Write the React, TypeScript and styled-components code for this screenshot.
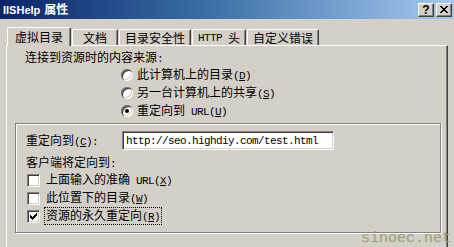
import React from "react";
import styled, { createGlobalStyle } from "styled-components";

const Global = createGlobalStyle`
  html, body { margin: 0; padding: 0; background: #D4D0C8; }
  * { box-sizing: border-box; }
  #root { width: 454px; height: 247px; }
`;

const Window = styled.div`
  position: relative;
  width: 454px;
  height: 247px;
  overflow: hidden;
  background: #D4D0C8;
  font-family: "Noto Sans CJK SC", "Liberation Sans", sans-serif;
  font-size: 12px;
  color: #000;
`;

const TitleBar = styled.div`
  height: 19px;
  display: flex;
  align-items: center;
  padding: 0 2px 0 3px;
  background: linear-gradient(to right, #0A246A 0%, #3A6EA5 45%, #A6CAF0 100%);
  color: #fff;
`;

const Title = styled.div`
  flex: 1;
  font-family: "Liberation Sans", "Noto Sans CJK SC", sans-serif;
  font-weight: bold;
  font-size: 11px;
  line-height: 19px;
  white-space: nowrap;
`;

const TitleCjk = styled.span`
  font-family: "Noto Sans CJK SC", sans-serif;
  font-size: 12px;
  margin-left: 4px;
`;

const Caps = styled.div`
  display: flex;
  gap: 2px;
`;

const CapBtn = styled.div`
  width: 16px;
  height: 14px;
  display: flex;
  align-items: center;
  justify-content: center;
  background: #D4D0C8;
  border-top: 1px solid #fff;
  border-left: 1px solid #fff;
  border-right: 1px solid #404040;
  border-bottom: 1px solid #404040;
  box-shadow: inset -1px -1px #808080;
  color: #000;
  font-family: "Liberation Sans", sans-serif;
  font-weight: bold;
  font-size: 12px;
  line-height: 12px;
`;

const Body = styled.div`
  padding: 8px 6px 0 6px;
`;

const TabStrip = styled.div`
  height: 18px;
  display: flex;
  align-items: flex-end;
  gap: 1px;
  padding-left: 1px;
  position: relative;
  z-index: 1;
`;

const Tab = styled.div<{ $active?: boolean }>`
  height: ${(p) => (p.$active ? "19px" : "16px")};
  margin-bottom: ${(p) => (p.$active ? "-1px" : "0")};
  min-width: 46px;
  padding: ${(p) => (p.$active ? "0 7px" : "0 5px")};
  display: flex;
  align-items: center;
  justify-content: center;
  background: #D4D0C8;
  border-top: 1px solid #fff;
  border-left: 1px solid #fff;
  border-right: 1px solid #404040;
  border-top-left-radius: 2px;
  border-top-right-radius: 2px;
  box-shadow: inset -1px 0 #808080;
  line-height: 14px;
  white-space: pre;
`;

const Panel = styled.div`
  height: 240px;
  border-top: 1px solid #fff;
  border-left: 1px solid #fff;
  border-right: 1px solid #404040;
  box-shadow: inset -1px 0 #808080;
  padding-top: 2px;
`;

const Heading = styled.div`
  height: 18px;
  line-height: 18px;
  padding-left: 18px;
`;

const RadioList = styled.div`
  display: flex;
  flex-direction: column;
  padding-left: 114px;
`;

const OptionRow = styled.div`
  height: 18px;
  display: flex;
  align-items: center;
  gap: 4px;
  line-height: 18px;
  white-space: pre;
`;

const RadioCircle = styled.span`
  width: 12px;
  height: 12px;
  border-radius: 50%;
  background: #fff;
  display: flex;
  align-items: center;
  justify-content: center;
  flex: none;
  box-shadow: inset 1px 1px #808080, inset 2px 2px #404040,
    inset -1px -1px #fff, inset -2px -2px #D4D0C8;
`;

const RadioDot = styled.span`
  width: 4px;
  height: 4px;
  border-radius: 50%;
  background: #000;
`;

const Group = styled.div`
  margin: 3px 6px 0 8px;
  border: 1px solid #808080;
  box-shadow: inset 1px 1px #fff, 1px 1px #fff;
  padding: 7px 10px 7px 10px;
`;

const FieldRow = styled.div`
  display: flex;
  align-items: center;
  height: 19px;
`;

const FieldLabel = styled.div`
  width: 96px;
  line-height: 18px;
  white-space: nowrap;
`;

const TextBox = styled.div`
  width: 212px;
  height: 19px;
  background: #fff;
  border-top: 1px solid #808080;
  border-left: 1px solid #808080;
  border-right: 1px solid #fff;
  border-bottom: 1px solid #fff;
  box-shadow: inset 1px 1px #404040, inset -1px -1px #D4D0C8;
  padding: 0 3px;
  display: flex;
  align-items: center;
  font-family: "Liberation Mono", monospace;
  font-size: 11px;
  letter-spacing: -0.6px;
  white-space: nowrap;
`;

const SubHeading = styled.div`
  margin-top: 3px;
  height: 18px;
  line-height: 18px;
`;

const CheckList = styled.div`
  display: flex;
  flex-direction: column;
  padding-left: 1px;
`;

const CheckBox = styled.span`
  width: 13px;
  height: 13px;
  flex: none;
  background: #fff;
  border-top: 1px solid #808080;
  border-left: 1px solid #808080;
  border-right: 1px solid #fff;
  border-bottom: 1px solid #fff;
  box-shadow: inset 1px 1px #404040, inset -1px -1px #D4D0C8;
  display: flex;
  align-items: center;
  justify-content: center;
`;

const LabelText = styled.span<{ $focus?: boolean }>`
  line-height: 14px;
  padding: 0 1px;
  border: 1px dotted ${(p) => (p.$focus ? "#000" : "transparent")};
`;

const Latin = styled.span`
  font-family: "Liberation Mono", monospace;
  font-size: 11px;
  letter-spacing: -0.6px;
`;

const Key = styled.span`
  text-decoration: underline;
`;

const Watermark = styled.div`
  position: absolute;
  right: 3px;
  bottom: 1px;
  font-family: "Liberation Mono", monospace;
  font-size: 15px;
  line-height: 15px;
  color: #9C9C74;
`;

const Acc = ({ k }: { k: string }) => (
  <Latin>
    (<Key>{k}</Key>)
  </Latin>
);

const Radio = ({ on, children }: { on?: boolean; children: React.ReactNode }) => (
  <OptionRow>
    <RadioCircle>{on && <RadioDot />}</RadioCircle>
    <span>{children}</span>
  </OptionRow>
);

const Check = ({
  on,
  focus,
  children,
}: {
  on?: boolean;
  focus?: boolean;
  children: React.ReactNode;
}) => (
  <OptionRow>
    <CheckBox>
      {on && (
        <svg width="7" height="7" viewBox="0 0 7 7" shapeRendering="crispEdges">
          <path d="M6 0h1v3h-1v1h-1v1h-1v1h-1v1h-1v-1h-1v-1h-1v-3h1v1h1v1h1v-1h1v-1h1z" fill="#000" />
        </svg>
      )}
    </CheckBox>
    <LabelText $focus={focus}>{children}</LabelText>
  </OptionRow>
);

export default function App() {
  return (
    <>
      <Global />
      <Window>
        <TitleBar>
          <Title>
            IISHelp<TitleCjk>属性</TitleCjk>
          </Title>
          <Caps>
            <CapBtn>?</CapBtn>
            <CapBtn>
              <svg width="8" height="7" viewBox="0 0 8 7" shapeRendering="crispEdges">
                <path d="M0 0h2v1h1v1h2v-1h1v-1h2v1h-1v1h-1v1h-1v1h1v1h1v1h1v1h-2v-1h-1v-1h-2v1h-1v1h-2v-1h1v-1h1v-1h1v-1h-1v-1h-1z" fill="#000" />
              </svg>
            </CapBtn>
          </Caps>
        </TitleBar>
        <Body>
          <TabStrip>
            <Tab $active>虚拟目录</Tab>
            <Tab>文档</Tab>
            <Tab>目录安全性</Tab>
            <Tab>
              <Latin>{"HTTP "}</Latin>头
            </Tab>
            <Tab>自定义错误</Tab>
          </TabStrip>
          <Panel>
            <Heading>
              连接到资源时的内容来源<Latin>:</Latin>
            </Heading>
            <RadioList>
              <Radio>
                此计算机上的目录<Acc k="D" />
              </Radio>
              <Radio>
                另一台计算机上的共享<Acc k="S" />
              </Radio>
              <Radio on>
                重定向到<Latin>{" URL"}</Latin>
                <Acc k="U" />
              </Radio>
            </RadioList>
            <Group>
              <FieldRow>
                <FieldLabel>
                  重定向到<Acc k="C" />
                  <Latin>:</Latin>
                </FieldLabel>
                <TextBox>http://seo.highdiy.com/test.html</TextBox>
              </FieldRow>
              <SubHeading>
                客户端将定向到<Latin>:</Latin>
              </SubHeading>
              <CheckList>
                <Check>
                  上面输入的准确<Latin>{" URL"}</Latin>
                  <Acc k="X" />
                </Check>
                <Check>
                  此位置下的目录<Acc k="W" />
                </Check>
                <Check on focus>
                  资源的永久重定向<Acc k="R" />
                </Check>
              </CheckList>
            </Group>
          </Panel>
        </Body>
        <Watermark>sinoec.net</Watermark>
      </Window>
    </>
  );
}
